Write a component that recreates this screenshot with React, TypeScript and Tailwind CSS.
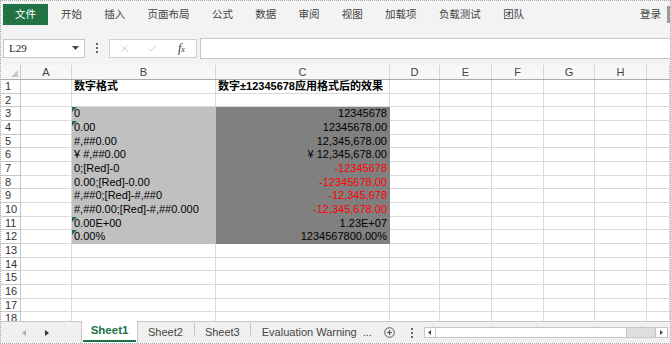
import { Check, X } from 'lucide-react';

const FONT = "font-['Liberation_Sans','Noto_Sans_CJK_SC',sans-serif]";

const COLS = [
  { key: 'A', label: 'A', w: 'w-[51px]' },
  { key: 'B', label: 'B', w: 'w-[144px]' },
  { key: 'C', label: 'C', w: 'w-[174px]' },
  { key: 'D', label: 'D', w: 'w-[50px]' },
  { key: 'E', label: 'E', w: 'w-[52px]' },
  { key: 'F', label: 'F', w: 'w-[52px]' },
  { key: 'G', label: 'G', w: 'w-[51px]' },
  { key: 'H', label: 'H', w: 'w-[52px]' },
  // column I is cut off by the window edge; its letter sits out of view
  { key: 'I', label: '', w: 'flex-1' },
];

const TABS = ['开始', '插入', '页面布局', '公式', '数据', '审阅', '视图', '加载项', '负载测试', '团队'];

interface FormatRow {
  fmt: string;
  value: string;
  red?: boolean;
  flag?: boolean;
}

const FORMATS: FormatRow[] = [
  { fmt: '0', value: '12345678', flag: true },
  { fmt: '0.00', value: '12345678.00', flag: true },
  { fmt: '#,##0.00', value: '12,345,678.00' },
  { fmt: '¥ #,##0.00', value: '¥ 12,345,678.00' },
  { fmt: '0;[Red]-0', value: '-12345678', red: true },
  { fmt: '0.00;[Red]-0.00', value: '-12345678.00', red: true },
  { fmt: '#,##0;[Red]-#,##0', value: '-12,345,678', red: true },
  { fmt: '#,##0.00;[Red]-#,##0.000', value: '-12,345,678.00', red: true },
  { fmt: '0.00E+00', value: '1.23E+07', flag: true },
  { fmt: '0.00%', value: '1234567800.00%', flag: true },
];

export default function App() {
  return (
    <div
      className={`w-[671px] h-[344px] overflow-hidden flex flex-col bg-[#f3f3f3] border border-dotted border-[#a8a8a8] text-[#222] ${FONT}`}
    >
      <RibbonTabs />
      <FormulaBar />
      <div className="h-[6px] shrink-0" />
      <Grid />
      <SheetBar />
    </div>
  );
}

function RibbonTabs() {
  return (
    <div className="h-[36px] shrink-0 flex items-start pt-[3px] text-[10.5px] text-[#444]">
      <div className="ml-[2px] w-[45px] h-[21px] bg-[#217346] text-white flex items-center justify-center">
        文件
      </div>
      <div className="ml-[13px] flex gap-[22.3px] h-[21px] items-center">
        {TABS.map((t) => (
          <span key={t}>{t}</span>
        ))}
      </div>
      <div className="ml-auto h-[21px] flex items-center">
        <span>登录</span>
        <div className="ml-[6px] w-[3px] h-[17px] bg-[#9a9a9a]" />
      </div>
    </div>
  );
}

function Dots() {
  return (
    <div className="flex flex-col gap-[2px]">
      <span className="w-[2px] h-[2px] bg-[#666]" />
      <span className="w-[2px] h-[2px] bg-[#666]" />
      <span className="w-[2px] h-[2px] bg-[#666]" />
    </div>
  );
}

function FormulaBar() {
  return (
    <div className="h-[22px] shrink-0 flex items-center">
      <div className="ml-[2px] w-[82px] h-[19px] bg-white border border-[#c6c6c6] flex items-center px-[5px] text-[11px] font-['Liberation_Serif',serif]">
        <span>L29</span>
        <svg className="ml-auto" width="7" height="4" viewBox="0 0 7 4">
          <path d="M0 0h7L3.5 4z" fill="#444" />
        </svg>
      </div>
      <div className="ml-[11px]">
        <Dots />
      </div>
      <div className="ml-[11px] w-[88px] h-[19px] bg-white border border-[#d0d0d0] flex items-center">
        <X size={11} strokeWidth={1.2} className="ml-[9px] text-[#a6a6a6]" />
        <Check size={11} strokeWidth={1.2} className="ml-[17px] text-[#a6a6a6]" />
        <span className="ml-[20px] italic text-[12px] text-[#333] font-['Liberation_Serif',serif] leading-none">
          f<span className="text-[8px]">x</span>
        </span>
      </div>
      <div className="ml-[3px] flex-1 h-[21px] bg-white border-y border-l border-[#c6c6c6]" />
    </div>
  );
}

function Grid() {
  const rows = Array.from({ length: 18 }, (_, i) => i + 1);
  return (
    <div className="flex-1 min-h-0 overflow-hidden flex flex-col bg-white text-[11px]">
      {/* column headers */}
      <div className="h-[15px] shrink-0 flex bg-[#f7f7f7] border-b border-[#ababab] text-[#444]">
        <div className="w-[20px] shrink-0 border-r border-[#c6c6c6] relative">
          <svg className="absolute right-[2px] bottom-[2px]" width="7" height="7" viewBox="0 0 7 7">
            <path d="M7 0v7H0z" fill="#c8c8c8" />
          </svg>
        </div>
        {COLS.map((c) => (
          <div
            key={c.key}
            className={`${c.w} shrink-0 border-r border-[#d4d4d4] flex items-center justify-center leading-none`}
          >
            {c.label}
          </div>
        ))}
      </div>
      {rows.map((r) => (
        <GridRow key={r} row={r} />
      ))}
    </div>
  );
}

function GridRow({ row }: { row: number }) {
  const data = row >= 3 && row <= 12 ? FORMATS[row - 3] : null;
  return (
    <div className="h-[13.67px] shrink-0 flex leading-[13px]">
      <div className="w-[20px] shrink-0 border-r border-b border-[#c6c6c6] pl-[4px] text-[#333]">
        {row}
      </div>
      {COLS.map((c) => {
        if (c.key === 'B' && row === 1) {
          return (
            <div key={c.key} className={`${c.w} shrink-0 border-r border-b border-[#dadada] pl-[2px] font-bold text-black`}>
              数字格式
            </div>
          );
        }
        if (c.key === 'C' && row === 1) {
          return (
            <div key={c.key} className={`${c.w} shrink-0 border-r border-b border-[#dadada] pl-[2px] font-bold text-black whitespace-nowrap`}>
              数字±12345678应用格式后的效果
            </div>
          );
        }
        if (c.key === 'B' && data) {
          return (
            <div
              key={c.key}
              className={`${c.w} shrink-0 relative bg-[#c0c0c0] border-r border-b border-[#c0c0c0] pl-[2px] text-black whitespace-nowrap`}
            >
              {data.flag && (
                <svg className="absolute left-0 top-0" width="5" height="5" viewBox="0 0 5 5">
                  <path d="M0 0h5L0 5z" fill="#1e7145" />
                </svg>
              )}
              {data.fmt}
            </div>
          );
        }
        if (c.key === 'C' && data) {
          return (
            <div
              key={c.key}
              className={`${c.w} shrink-0 bg-[#808080] border-r border-b border-[#808080] pr-[2px] text-right whitespace-nowrap ${data.red ? 'text-[#ff0000]' : 'text-black'}`}
            >
              {data.value}
            </div>
          );
        }
        return <div key={c.key} className={`${c.w} shrink-0 border-r border-b border-[#dadada]`} />;
      })}
    </div>
  );
}

function SheetBar() {
  return (
    <div className="h-[22px] shrink-0 flex items-stretch bg-[#f0f0f0] border-t border-[#c6c6c6] text-[11px] text-[#444]">
      <div className="w-[80px] shrink-0 flex items-center">
        <svg className="ml-[21px]" width="4" height="6" viewBox="0 0 4 6">
          <path d="M4 0v6L0 3z" fill="#b0b0b0" />
        </svg>
        <svg className="ml-[19px]" width="4" height="6" viewBox="0 0 4 6">
          <path d="M0 0v6l4-3z" fill="#333" />
        </svg>
      </div>
      <div className="w-[57px] shrink-0 -mt-px bg-white border-x border-[#c6c6c6] flex flex-col">
        <div className="flex-1 flex items-center justify-center font-bold text-[#217346] text-[11.5px]">Sheet1</div>
        <div className="h-[2px] bg-[#217346] mx-[1px] mb-[1px]" />
      </div>
      <div className="flex items-center">
        <span className="ml-[10px]">Sheet2</span>
        <span className="ml-[11px] w-px h-[12px] bg-[#c6c6c6] self-start mt-[1px]" />
        <span className="ml-[10px]">Sheet3</span>
        <span className="ml-[10px] w-px h-[12px] bg-[#c6c6c6] self-start mt-[1px]" />
        <span className="ml-[11px] whitespace-nowrap">Evaluation Warning</span>
        <span className="ml-[6px]">...</span>
        <svg className="ml-[12px]" width="11" height="11" viewBox="0 0 11 11">
          <circle cx="5.5" cy="5.5" r="4.8" fill="none" stroke="#555" strokeWidth="1" />
          <path d="M5.5 3v5M3 5.5h5" stroke="#555" strokeWidth="1.2" />
        </svg>
        <div className="ml-[16px]">
          <Dots />
        </div>
      </div>
      <div className="ml-[11px] flex-1 flex items-center pr-[2px]">
        <div className="h-[11px] flex-1 flex border border-[#c6c6c6] bg-[#dedede]">
          <div className="w-[11px] bg-white border-r border-[#c6c6c6] flex items-center justify-center">
            <svg width="3" height="5" viewBox="0 0 3 5">
              <path d="M3 0v5L0 2.5z" fill="#444" />
            </svg>
          </div>
          <div className="w-[191px] bg-white border-r border-[#c6c6c6]" />
          <div className="flex-1" />
          <div className="w-[12px] bg-white border-l border-[#c6c6c6] flex items-center justify-center">
            <svg width="3" height="5" viewBox="0 0 3 5">
              <path d="M0 0v5l3-2.5z" fill="#444" />
            </svg>
          </div>
        </div>
      </div>
    </div>
  );
}
